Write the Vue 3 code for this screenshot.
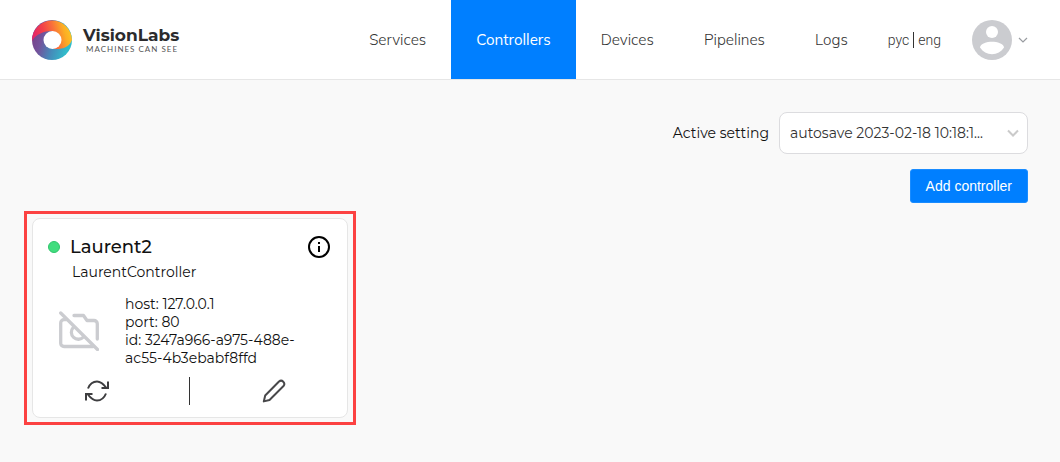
<script setup>
import { ref } from 'vue'

const links = ['Services', 'Controllers', 'Devices', 'Pipelines', 'Logs']
const active = ref('Controllers')
const settings = ['autosave 2023-02-18 10:18:1...']
const setting = ref(settings[0])
const controllers = [
  {
    name: 'Laurent2',
    type: 'LaurentController',
    host: '127.0.0.1',
    port: 80,
    id: '3247a966-a975-488e-ac55-4b3ebabf8ffd',
  },
]
</script>

<template>
  <div class="page">
    <header class="topbar">
      <a class="brand" href="#">
        <svg class="brand-mark" viewBox="0 0 40 40" aria-hidden="true">
          <defs>
            <linearGradient id="warm" x1="0" y1="0.500" x2="1" y2="0.300">
              <stop offset="0" stop-color="#e3226b" />
              <stop offset="0.3" stop-color="#f2404a" />
              <stop offset="0.55" stop-color="#f9703a" />
              <stop offset="0.8" stop-color="#fcae24" />
              <stop offset="1" stop-color="#fdc826" />
            </linearGradient>
            <linearGradient id="cool" x1="0" y1="0" x2="1" y2="0.3">
              <stop offset="0" stop-color="#793a80" />
              <stop offset="0.35" stop-color="#73539c" />
              <stop offset="0.65" stop-color="#4689b9" />
              <stop offset="1" stop-color="#31bccb" />
            </linearGradient>
          </defs>
          <circle cx="20" cy="20" r="20" fill="url(#cool)" />
          <path d="M0 21A20 20 0 0 1 40 20C37 27 31 29.500 22 29L20 11C12 11 4 14 0 21Z" fill="url(#warm)" />
          <circle cx="20.500" cy="20" r="9" fill="#fff" />
        </svg>
        <span class="brand-text">
          <span class="brand-name">VisionLabs</span>
          <span class="brand-tag">MACHINES CAN SEE</span>
        </span>
      </a>

      <nav class="nav">
        <a
          v-for="link in links"
          :key="link"
          href="#"
          :class="['nav-link', { active: link === active }]"
          @click.prevent="active = link"
        >{{ link }}</a>
      </nav>

      <div class="langs">
        <button type="button" class="lang">рус</button>
        <span class="lang-line"></span>
        <button type="button" class="lang">eng</button>
      </div>

      <button type="button" class="account" aria-label="Account">
        <svg class="avatar" viewBox="0 0 40 40">
          <circle cx="20" cy="20" r="20" fill="#cbccd0" />
          <circle cx="20" cy="12" r="6" fill="#fff" />
          <path d="M8 27.500C8 23.800 15 21.800 20 21.800S32 23.800 32 27.500C29 32 25 34.300 20 34.300S11 32 8 27.500Z" fill="#fff" />
        </svg>
        <svg class="account-chevron" viewBox="0 0 10 10">
          <path d="M1 3L5 7L9 3" fill="none" stroke="#999ca1" stroke-width="1.200" />
        </svg>
      </button>
    </header>

    <main class="content">
      <div class="setting">
        <label for="setting">Active setting</label>
        <div class="select-wrap">
          <select id="setting" v-model="setting">
            <option v-for="s in settings" :key="s">{{ s }}</option>
          </select>
          <svg class="select-chevron" viewBox="0 0 12 12" aria-hidden="true">
            <path d="M1 3.500L6 8.500L11 3.500" fill="none" stroke="#cacaca" stroke-width="2" />
          </svg>
        </div>
      </div>

      <div class="actions">
        <button type="button" class="add">Add controller</button>
      </div>

      <div class="grid">
        <div v-for="c in controllers" :key="c.id" class="highlight">
          <article class="card">
            <div class="card-head">
              <span class="status"></span>
              <h2>{{ c.name }}</h2>
              <button type="button" class="icon-button" aria-label="Information">
                <svg class="info" viewBox="0 0 24 24">
                  <circle cx="12" cy="12" r="10" fill="none" stroke="#000" stroke-width="2" />
                  <path d="M12 11V17M12 7V9" stroke="#000" stroke-width="2" />
                </svg>
              </button>
            </div>
            <p class="type">{{ c.type }}</p>
            <div class="card-body">
              <svg class="camera" viewBox="0 0 40 40" aria-hidden="true">
                <g fill="none" stroke="#cbccd0" stroke-width="3.300" stroke-linecap="round" stroke-linejoin="round">
                  <path d="M1.700 2L38.500 38.500" />
                  <path d="M34 35.500H5A3.300 3.300 0 0 1 1.700 32.200V12A3.300 3.300 0 0 1 5 8.700H7" />
                  <path d="M15 4.500H24.500L28 9.500H35A3.300 3.300 0 0 1 38.300 12.800V28" />
                  <path d="M14.200 16.500A7 7 0 1 0 24.500 26" />
                </g>
              </svg>
              <div class="details">
                <div>host: {{ c.host }}</div>
                <div>port: {{ c.port }}</div>
                <div>id: {{ c.id }}</div>
              </div>
            </div>
            <div class="card-actions">
              <button type="button" class="icon-button reload" aria-label="Reload">
                <svg class="action-icon" viewBox="0 0 24 24">
                  <g fill="none" stroke="#3e3e40" stroke-width="2">
                    <path d="M3 9.500C5 4.500 8 2.500 12 2.500C16 2.500 18.500 5 21.500 9" />
                    <path d="M23 2.500V9H16.500" />
                    <path d="M21 14.500C19 19.500 16 21.500 12 21.500C8 21.500 5.500 19 2.500 15" />
                    <path d="M1 21.500V15H7.500" />
                  </g>
                </svg>
              </button>
              <span class="action-line"></span>
              <button type="button" class="icon-button edit" aria-label="Edit">
                <svg class="action-icon" viewBox="0 0 24 24">
                  <path d="M17 2.500A3.200 3.200 0 0 1 21.500 7L7.500 21L1.800 22.400L3.200 16.500Z" fill="none" stroke="#48484a" stroke-width="2" stroke-linejoin="round" />
                </svg>
              </button>
            </div>
          </article>
        </div>
      </div>
    </main>
  </div>
</template>

<style>
body {
  margin: 0;
  background: #f9f9f9;
}
</style>

<style scoped>
.page {
  min-height: 100vh;
  background: #f9f9f9;
  color: #111;
  font-family: Montserrat, Inter, "Open Sans", sans-serif;
  font-size: 14px;
  font-weight: 400;
}

.page * {
  box-sizing: border-box;
}

button {
  padding: 0;
  border: 0;
  background: none;
  color: inherit;
  font: inherit;
  cursor: pointer;
}

svg {
  display: block;
}

.topbar {
  display: flex;
  align-items: center;
  height: 80px;
  padding: 0 32px;
  background: #fff;
  border-bottom: 1px solid #e6e6e6;
}

.brand {
  display: flex;
  align-items: center;
  gap: 11px;
  margin-right: auto;
  color: #2b2b2d;
  text-decoration: none;
}

.brand-mark {
  width: 40px;
  height: 40px;
}

.brand-text {
  display: flex;
  flex-direction: column;
}

.brand-name {
  font-size: 17px;
  font-weight: 700;
  line-height: 20px;
}

.brand-tag {
  padding-left: 3px;
  color: #555;
  font-family: Lato, sans-serif;
  font-size: 8px;
  letter-spacing: 1px;
  line-height: 9px;
}

.nav {
  display: flex;
  align-self: stretch;
}

.nav-link {
  display: flex;
  align-items: center;
  padding: 0 25px;
  color: #333;
  font-family: Muli, Mulish, Montserrat, sans-serif;
  font-size: 15px;
  font-weight: 300;
  text-decoration: none;
}

.nav-link.active {
  background: #007fff;
  color: #fff;
  font-weight: 400;
}

.langs {
  display: flex;
  align-items: center;
  gap: 4px;
  margin-left: 15px;
  color: #333;
  font-family: Roboto, sans-serif;
  font-weight: 300;
}

.lang-line {
  width: 1px;
  height: 16px;
  background: #333;
}

.account {
  display: flex;
  align-items: center;
  gap: 6px;
  margin-left: 31px;
}

.avatar {
  width: 40px;
  height: 40px;
}

.account-chevron {
  width: 10px;
  height: 10px;
}

.content {
  padding: 32px 24px;
}

.setting {
  display: flex;
  align-items: center;
  justify-content: flex-end;
  gap: 10px;
  padding-right: 8px;
}

.select-wrap {
  position: relative;
  width: 249px;
}

select {
  width: 100%;
  height: 42px;
  padding: 0 32px 0 10px;
  appearance: none;
  border: 1px solid #dcdcdf;
  border-radius: 8px;
  background: #fff;
  color: #333;
  font: inherit;
}

.select-chevron {
  position: absolute;
  top: 15px;
  right: 9px;
  width: 12px;
  height: 12px;
  pointer-events: none;
}

.actions {
  display: flex;
  justify-content: flex-end;
  padding: 15px 8px 8px;
}

.add {
  height: 34px;
  padding: 0 15px;
  border: 1px solid #1a8cff;
  border-radius: 3px;
  background: #007fff;
  color: #fff;
  font-family: "Liberation Sans", Arial, sans-serif;
  font-size: 14px;
}

.grid {
  display: grid;
  grid-template-columns: repeat(auto-fill, minmax(320px, 1fr));
  gap: 8px;
}

.highlight {
  padding: 4px 5px;
  border: 3px solid #fc4242;
}

.card {
  padding: 16px 15px 12px;
  border: 1px solid #e6e6e6;
  border-radius: 8px;
  background: #fff;
}

.card-head {
  display: flex;
  align-items: center;
  height: 24px;
}

.status {
  width: 12px;
  height: 12px;
  border: 1px solid #2fc56c;
  border-radius: 50%;
  background: #41dd7e;
}

h2 {
  flex: 1;
  margin: 0 0 0 10px;
  font-size: 18px;
  font-weight: 500;
}

.info {
  width: 24px;
  height: 24px;
  margin-right: 1px;
}

.type {
  margin: 4px 0 0 24px;
  line-height: 18px;
}

.card-body {
  display: flex;
  align-items: center;
  gap: 26px;
  margin-top: 14px;
  padding: 0 32px 0 11px;
}

.camera {
  flex: none;
  width: 40px;
  height: 40px;
}

.details {
  line-height: 18px;
}

.card-actions {
  display: grid;
  grid-template-columns: 1fr 1px 1fr;
  align-items: center;
  justify-items: center;
  height: 28px;
  margin-top: 10px;
  padding-right: 2px;
}

.action-line {
  width: 1px;
  height: 28px;
  background: #333;
}

.action-icon {
  width: 24px;
  height: 24px;
}

.reload {
  margin-right: 43px;
}

.edit {
  margin-left: 28px;
}
</style>
